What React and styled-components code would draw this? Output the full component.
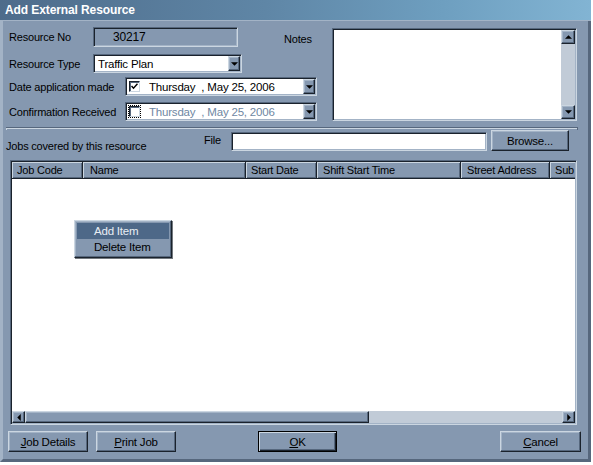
import React from 'react';
import styled, { createGlobalStyle, css } from 'styled-components';

const C = {
  face: '#8598b0',
  hi: '#cbd6e1',
  light: '#a3b3c6',
  shadow: '#56677d',
  dark: '#1a222c',
  track: '#c1cbd7',
  disabled: '#6f87a2',
  menuHi: '#4d6888',
};

const GlobalStyle = createGlobalStyle`
  * { box-sizing: border-box; }
  html, body { margin: 0; padding: 0; background: #ffffff; }
  body {
    font-family: "Liberation Sans", Arial, sans-serif;
    font-size: 11px;
    letter-spacing: -0.2px;
    color: #000;
  }
`;

const raised = css`
  border: 1px solid;
  border-color: ${C.hi} ${C.dark} ${C.dark} ${C.hi};
  box-shadow: inset -1px -1px 0 ${C.shadow}, inset 1px 1px 0 ${C.light};
`;

const sunken = css`
  border: 1px solid;
  border-color: ${C.shadow} ${C.hi} ${C.hi} ${C.shadow};
  box-shadow: inset 1px 1px 0 ${C.dark}, inset -1px -1px 0 ${C.light};
  padding: 1px;
`;

const Window = styled.div`
  width: 591px;
  display: flex;
  flex-direction: column;
  background: ${C.face};
`;

const TitleBar = styled.div`
  height: 21px;
  padding-left: 5px;
  line-height: 20px;
  font-weight: bold;
  font-size: 12px;
  letter-spacing: -0.1px;
  color: #ffffff;
  background: linear-gradient(90deg, #4e6c8b 0%, #5f86a6 45%, #6e9fc0 75%, #82b4d3 100%);
  border-bottom: 1px solid ${C.light};
`;

const Body = styled.div`
  border: 3px solid;
  border-top: none;
  border-color: ${C.light} ${C.shadow} ${C.shadow} ${C.light};
  padding: 6px 6px 7px 2px;
  display: flex;
  flex-direction: column;
`;

const TopSection = styled.div`
  display: flex;
  align-items: flex-start;
`;

const FormColumn = styled.div`
  width: 327px;
  display: flex;
  flex-direction: column;
`;

const FieldRow = styled.div`
  display: flex;
  align-items: center;
  height: ${p => p.$h}px;
  margin-top: ${p => p.$mt || 0}px;
`;

const Label = styled.div`
  margin-left: 4px;
  width: ${p => p.$w}px;
  white-space: nowrap;
`;

const NotesLabel = styled.div`
  margin-left: 46px;
  align-self: flex-start;
  padding-top: 6px;
`;

const ReadOnlyBox = styled.div`
  ${sunken};
  width: 145px;
  height: 100%;
  padding-left: 19px;
  display: flex;
  align-items: center;
  font-size: 12px;
  color: #000;
`;

const Combo = styled.div`
  ${sunken};
  width: ${p => p.$w}px;
  height: 100%;
  background: #ffffff;
  display: flex;
  align-items: stretch;
`;

const ComboText = styled.div`
  flex: 1;
  display: flex;
  align-items: center;
  padding-left: ${p => p.$pl || 3}px;
  white-space: pre;
  color: ${p => (p.$disabled ? C.disabled : '#000')};
  font-size: 11.5px;
`;

const ArrowButton = styled.div`
  ${raised};
  width: ${p => p.$w || 12}px;
  height: ${p => (p.$h ? `${p.$h}px` : 'auto')};
  flex: none;
  background: ${C.face};
  display: flex;
  align-items: center;
  justify-content: center;
`;

const CheckSlot = styled.div`
  width: 15px;
  display: flex;
  align-items: center;
  justify-content: center;
`;

const FocusRing = styled.div`
  padding: 1px;
  outline: ${p => (p.$focus ? '1px dotted #000' : 'none')};
  outline-offset: -1px;
  display: flex;
`;

const CheckBox = styled.div`
  width: 11px;
  height: 11px;
  background: #ffffff;
  border: 1px solid;
  border-color: ${C.dark} ${C.hi} ${C.hi} ${C.dark};
  box-shadow: inset 1px 1px 0 ${C.shadow};
  display: flex;
  align-items: center;
  justify-content: center;
`;

const NotesBox = styled.div`
  ${sunken};
  margin-top: 1px;
  width: 245px;
  height: 93px;
  background: #ffffff;
  display: flex;
  justify-content: flex-end;
`;

const VScroll = styled.div`
  width: 14px;
  display: flex;
  flex-direction: column;
  background: ${C.track};
`;

const Spacer = styled.div`
  flex: 1;
`;

const Separator = styled.div`
  margin-top: 6px;
  margin-left: 1px;
  width: 572px;
  height: 3px;
  border-top: 1px solid ${C.shadow};
  border-right: 1px solid ${C.shadow};
  box-shadow: inset 1px 1px 0 ${C.hi};
`;

const FileRow = styled.div`
  height: 21px;
  display: flex;
  align-items: flex-start;
`;

const JobsLabel = styled.div`
  margin-left: 1px;
  width: 198px;
  padding-top: 10px;
  white-space: nowrap;
`;

const FileLabel = styled.div`
  width: 27px;
  padding-top: 4px;
`;

const TextBox = styled.div`
  ${sunken};
  margin-top: 2px;
  width: 256px;
  height: 19px;
  background: #ffffff;
`;

const Button = styled.div`
  ${raised};
  width: ${p => p.$w}px;
  height: 21px;
  margin-left: ${p => (p.$ml === 'auto' ? 'auto' : `${p.$ml || 0}px`)};
  margin-right: ${p => p.$mr || 0}px;
  background: ${C.face};
  display: flex;
  align-items: center;
  justify-content: center;
  font-size: 11.5px;
  ${p =>
    p.$default &&
    css`
      border: 1px solid #000;
      box-shadow: inset 1px 1px 0 ${C.hi}, inset -1px -1px 0 ${C.dark}, inset -2px -2px 0 ${C.shadow};
    `}
  u { text-decoration: underline; }
`;

const ListView = styled.div`
  ${sunken};
  position: relative;
  margin-top: 9px;
  margin-left: 5px;
  width: 567px;
  height: 265px;
  display: flex;
  flex-direction: column;
  background: #ffffff;
`;

const Header = styled.div`
  height: 17px;
  display: flex;
  overflow: hidden;
  background: ${C.face};
  flex: none;
`;

const HeaderCell = styled.div`
  width: ${p => p.$w}px;
  flex: none;
  border-right: 1px solid ${C.dark};
  border-bottom: 1px solid ${C.dark};
  box-shadow: inset 1px 1px 0 ${C.hi}, inset -1px -1px 0 ${C.shadow};
  padding-left: ${p => p.$pl || 6}px;
  display: flex;
  align-items: center;
  white-space: nowrap;
  overflow: hidden;
`;

const ListBody = styled.div`
  flex: 1;
  background: #ffffff;
`;

const HScroll = styled.div`
  height: 12px;
  display: flex;
  background: ${C.track};
  flex: none;
`;

const Thumb = styled.div`
  ${raised};
  width: 344px;
  background: ${C.face};
`;

const ContextMenu = styled.div`
  position: absolute;
  left: 63px;
  top: 59px;
  width: 98px;
  padding: 2px;
  background: ${C.face};
  border: 1px solid;
  border-color: ${C.hi} ${C.dark} ${C.dark} ${C.hi};
  box-shadow: inset -1px -1px 0 ${C.shadow}, inset 1px 1px 0 ${C.light}, 1px 1px 0 rgba(20, 30, 40, 0.6);
`;

const MenuItem = styled.div`
  height: 16px;
  padding-left: 17px;
  display: flex;
  align-items: center;
  font-size: 11.5px;
  background: ${p => (p.$active ? C.menuHi : 'transparent')};
  color: ${p => (p.$active ? '#e8eef4' : '#000')};
`;

const ButtonBar = styled.div`
  margin-top: 6px;
  display: flex;
  align-items: center;
`;

const Tri = ({ dir = 'down' }) => {
  const pts = {
    down: '0,0 6,0 3,3',
    up: '0,3 6,3 3,0',
    left: '3,0 3,6 0,3',
    right: '0,0 0,6 3,3',
  }[dir];
  const w = dir === 'left' || dir === 'right' ? 4 : 7;
  const h = dir === 'left' || dir === 'right' ? 7 : 4;
  return (
    <svg width={w} height={h} viewBox={`0 0 ${w - 1} ${h - 1}`} style={{ display: 'block' }}>
      <polygon points={pts} fill="#000" />
    </svg>
  );
};

const Check = () => (
  <svg width="7" height="7" viewBox="0 0 7 7" style={{ display: 'block' }}>
    <polyline points="0.5,3 2.5,5.2 6.5,0.8" fill="none" stroke="#000" strokeWidth="1.5" />
  </svg>
);

const DatePicker = ({ checked, disabled }) => (
  <Combo $w={192}>
    <CheckSlot>
      <FocusRing $focus={!checked}>
        <CheckBox>{checked && <Check />}</CheckBox>
      </FocusRing>
    </CheckSlot>
    <ComboText $disabled={disabled} $pl={7}>
      {'Thursday  , May 25, 2006'}
    </ComboText>
    <ArrowButton>
      <Tri />
    </ArrowButton>
  </Combo>
);

const columns = [
  { label: 'Job Code', w: 71, pl: 5 },
  { label: 'Name', w: 163, pl: 7 },
  { label: 'Start Date', w: 71, pl: 5 },
  { label: 'Shift Start Time', w: 144, pl: 6 },
  { label: 'Street Address', w: 89, pl: 6 },
  { label: 'Sub', w: 40, pl: 5 },
];

export default function App() {
  return (
    <>
      <GlobalStyle />
      <Window>
        <TitleBar>Add External Resource</TitleBar>
        <Body>
          <TopSection>
            <FormColumn>
              <FieldRow $h={20}>
                <Label $w={84}>Resource No</Label>
                <ReadOnlyBox>30217</ReadOnlyBox>
                <NotesLabel>Notes</NotesLabel>
              </FieldRow>
              <FieldRow $h={19} $mt={7}>
                <Label $w={84}>Resource Type</Label>
                <Combo $w={149}>
                  <ComboText>Traffic Plan</ComboText>
                  <ArrowButton>
                    <Tri />
                  </ArrowButton>
                </Combo>
              </FieldRow>
              <FieldRow $h={19} $mt={4}>
                <Label $w={116}>Date application made</Label>
                <DatePicker checked />
              </FieldRow>
              <FieldRow $h={19} $mt={6}>
                <Label $w={116}>Confirmation Received</Label>
                <DatePicker disabled />
              </FieldRow>
            </FormColumn>
            <NotesBox>
              <VScroll>
                <ArrowButton $w={14} $h={14}>
                  <Tri dir="up" />
                </ArrowButton>
                <Spacer />
                <ArrowButton $w={14} $h={14}>
                  <Tri dir="down" />
                </ArrowButton>
              </VScroll>
            </NotesBox>
          </TopSection>
          <Separator />
          <FileRow>
            <JobsLabel>Jobs covered by this resource</JobsLabel>
            <FileLabel>File</FileLabel>
            <TextBox />
            <Button $w={78} $ml={4}>Browse...</Button>
          </FileRow>
          <ListView>
            <Header>
              {columns.map(c => (
                <HeaderCell key={c.label} $w={c.w} $pl={c.pl}>
                  {c.label}
                </HeaderCell>
              ))}
            </Header>
            <ListBody />
            <HScroll>
              <ArrowButton $w={13}>
                <Tri dir="left" />
              </ArrowButton>
              <Thumb />
              <Spacer />
              <ArrowButton $w={13}>
                <Tri dir="right" />
              </ArrowButton>
            </HScroll>
            <ContextMenu>
              <MenuItem $active>Add Item</MenuItem>
              <MenuItem>Delete Item</MenuItem>
            </ContextMenu>
          </ListView>
          <ButtonBar>
            <Button $w={80} $ml={3}>
              <span><u>J</u>ob Details</span>
            </Button>
            <Button $w={80} $ml={8}>
              <span><u>P</u>rint Job</span>
            </Button>
            <Button $w={79} $ml={82} $default>
              <span><u>O</u>K</span>
            </Button>
            <Button $w={81} $ml="auto" $mr={1}>
              <span><u>C</u>ancel</span>
            </Button>
          </ButtonBar>
        </Body>
      </Window>
    </>
  );
}
